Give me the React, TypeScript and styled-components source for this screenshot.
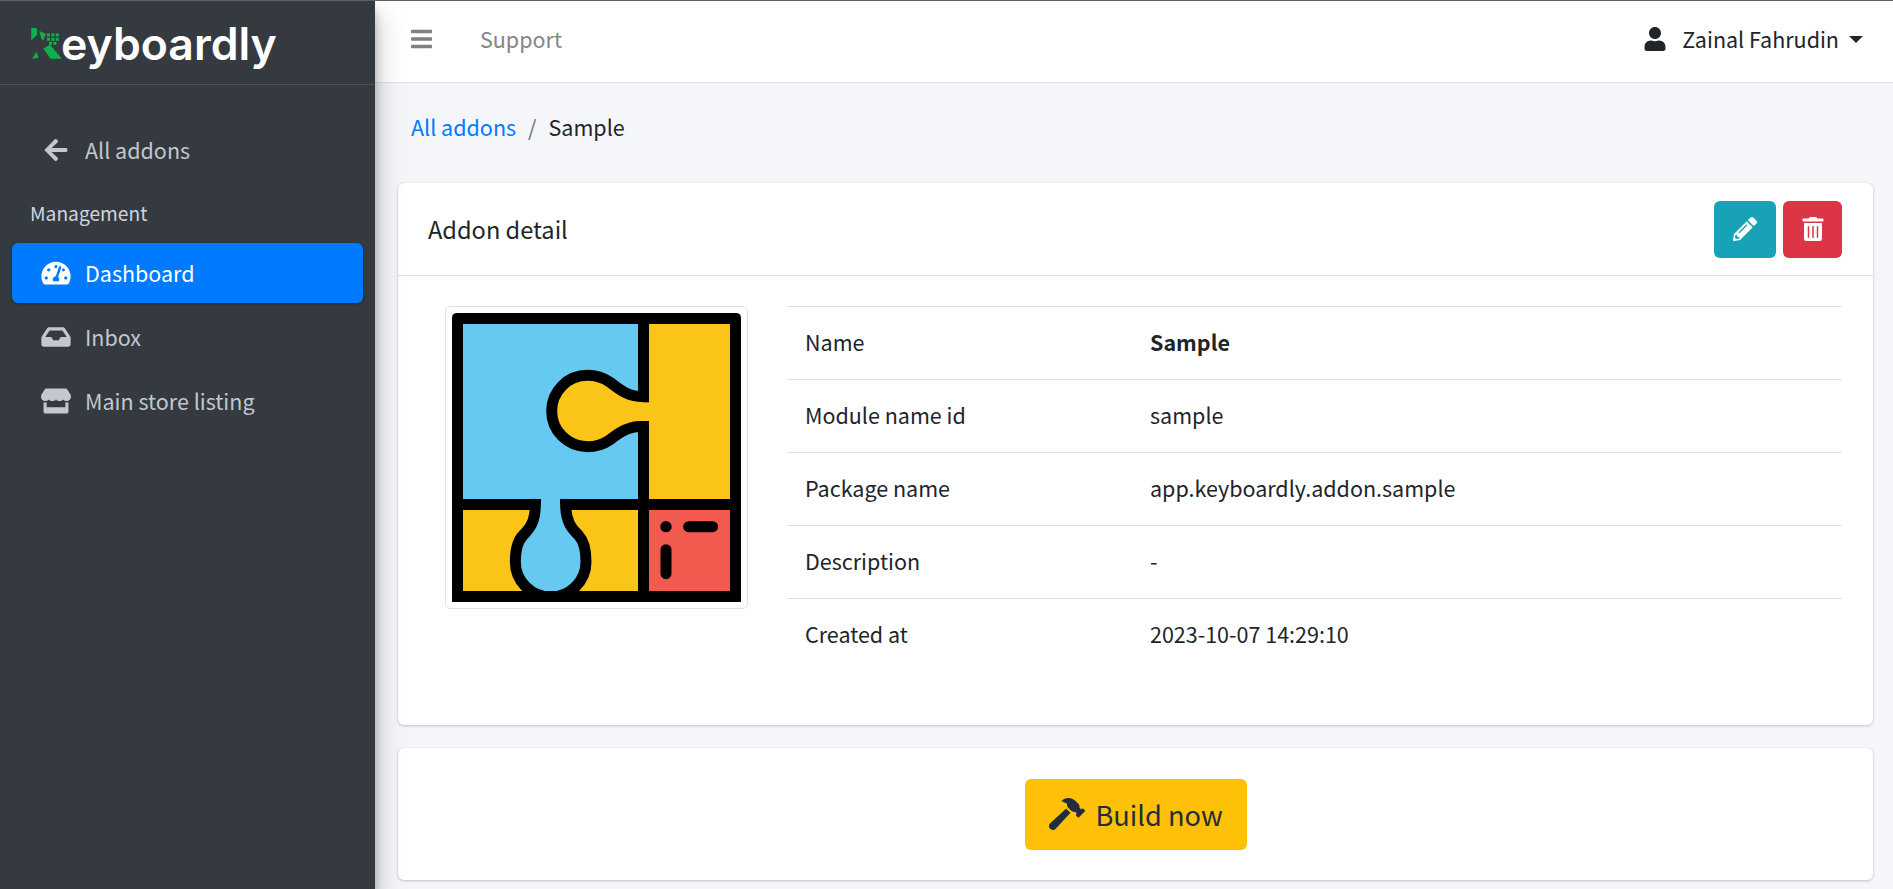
import styled, { createGlobalStyle } from 'styled-components'
import {
  FaArrowLeft,
  FaBars,
  FaHammer,
  FaInbox,
  FaPencilAlt,
  FaStore,
  FaTachometerAlt,
  FaTrashAlt,
  FaUser,
} from 'react-icons/fa'

const GlobalStyle = createGlobalStyle`
  html, body {
    margin: 0;
    padding: 0;
    height: 100%;
  }
  body {
    font-family: "Noto Sans CJK SC", "Open Sans", sans-serif;
    font-size: 21.5px;
    line-height: 30px;
    color: #212529;
    background: #f4f6f9;
  }
  * {
    box-sizing: border-box;
  }
`

const rows = [
  { label: 'Name', value: 'Sample', strong: true },
  { label: 'Module name id', value: 'sample' },
  { label: 'Package name', value: 'app.keyboardly.addon.sample' },
  { label: 'Description', value: '-' },
  { label: 'Created at', value: '2023-10-07 14:29:10' },
]

const logoDots = [
  [141, 101],
  [154, 101],
  [167, 101],
  [141, 114],
  [154, 114],
  [167, 114],
  [147, 126],
  [160, 126],
]

export default function App() {
  return (
    <>
      <GlobalStyle />
      <Page>
        <Sidebar>
          <Brand>
            <LogoMark viewBox='94 85 91 92' aria-hidden='true'>
              <path d='M94 85h17l1 20-18 17z' fill='#0db14b' />
              <path d='M118 94l20 8-8 20-6-6z' fill='#0db14b' />
              <path d='M97 176l13-21 6 19z' fill='#0db14b' />
              <path d='M130 146l20-11 35 41h-34z' fill='#0db14b' />
              {logoDots.map(([x, y]) => (
                <rect key={`${x}-${y}`} x={x} y={y} width='9' height='9' fill='#0db14b' />
              ))}
            </LogoMark>
            <BrandName>eyboardly</BrandName>
          </Brand>
          <SideNav>
            <SideLink>
              <FaArrowLeft />
              All addons
            </SideLink>
            <SideHeading>Management</SideHeading>
            <SideLink $active>
              <FaTachometerAlt />
              Dashboard
            </SideLink>
            <SideLink>
              <FaInbox />
              Inbox
            </SideLink>
            <SideLink>
              <FaStore />
              Main store listing
            </SideLink>
          </SideNav>
        </Sidebar>

        <Main>
          <TopBar>
            <BarsButton>
              <FaBars />
            </BarsButton>
            <TopLink>Support</TopLink>
            <UserMenu>
              <FaUser />
              Zainal Fahrudin
              <Caret />
            </UserMenu>
          </TopBar>

          <Content>
            <Breadcrumb>
              <Crumb href='#'>All addons</Crumb>
              <CrumbDivider>/</CrumbDivider>
              <span>Sample</span>
            </Breadcrumb>

            <DetailCard>
              <CardHeader>
                <CardTitle>Addon detail</CardTitle>
                <HeaderActions>
                  <IconButton $color='#17a2b8' $width={62}>
                    <FaPencilAlt />
                  </IconButton>
                  <IconButton $color='#dc3545' $width={59}>
                    <FaTrashAlt />
                  </IconButton>
                </HeaderActions>
              </CardHeader>
              <CardBody>
                <Thumbnail>
                  <PuzzleIcon />
                </Thumbnail>
                <InfoTable>
                  <tbody>
                    {rows.map((row) => (
                      <tr key={row.label}>
                        <LabelCell>{row.label}</LabelCell>
                        <ValueCell $strong={row.strong}>{row.value}</ValueCell>
                      </tr>
                    ))}
                  </tbody>
                </InfoTable>
              </CardBody>
            </DetailCard>

            <BuildCard>
              <BuildButton>
                <FaHammer />
                Build now
              </BuildButton>
            </BuildCard>
          </Content>
        </Main>
      </Page>
    </>
  )
}

function PuzzleIcon() {
  return (
    <svg viewBox='66 54 867 867' width='289' height='289' aria-hidden='true'>
      <rect x='66' y='54' width='867' height='867' rx='14' fill='#000' />
      <rect x='99' y='87' width='525' height='525' fill='#66c9f1' />
      <rect x='657' y='87' width='243' height='525' fill='#fbc419' />
      <rect x='99' y='645' width='525' height='243' fill='#fbc419' />
      <rect x='657' y='645' width='243' height='243' fill='#f25a50' />
      <path
        d='M640 305C590 305 565 280 540 262C520 248 497 241 472 241A107 107 0 0 0 472 455C497 455 520 448 540 434C565 416 590 394 640 394'
        fill='#fbc419'
        stroke='#000'
        strokeWidth='33'
        strokeLinecap='round'
      />
      <rect x='620' y='322' width='40' height='56' fill='#fbc419' />
      <path
        d='M316 628C316 680 300 700 280 720C262 738 256 770 256 800A106 106 0 0 0 468 800C468 770 462 738 445 720C425 700 407 680 407 628'
        fill='#66c9f1'
        stroke='#000'
        strokeWidth='33'
        strokeLinecap='round'
      />
      <rect x='333' y='608' width='57' height='44' fill='#66c9f1' />
      <rect x='66' y='888' width='867' height='33' fill='#000' />
      <circle cx='708' cy='695' r='17' fill='#000' />
      <path
        d='M776 695H848M708 764V836'
        stroke='#000'
        strokeWidth='33'
        strokeLinecap='round'
      />
    </svg>
  )
}

const Page = styled.div`
  display: flex;
  height: 100vh;
  overflow: hidden;
  border-top: 1px solid #5f6063;
`

const Sidebar = styled.aside`
  flex: 0 0 375px;
  background: #343a40;
  color: #c2c7d0;
  position: relative;
  z-index: 2;
  box-shadow: 0 14px 28px rgba(0, 0, 0, 0.25), 0 10px 10px rgba(0, 0, 0, 0.22);
`

const Brand = styled.div`
  display: flex;
  align-items: center;
  height: 84px;
  padding: 2px 0 0 31px;
  border-bottom: 1px solid #4b545c;
`

const LogoMark = styled.svg`
  width: 31px;
  height: 31px;
  flex: none;
`

const BrandName = styled.span`
  font-family: 'Inter', sans-serif;
  font-weight: 600;
  font-size: 44.6px;
  line-height: 44px;
  color: #fff;
  margin-left: -1px;
`

const SideNav = styled.nav`
  display: flex;
  flex-direction: column;
  padding: 35px 12px 0;
`

const SideLink = styled.a<{ $active?: boolean }>`
  display: flex;
  align-items: center;
  height: 60px;
  margin-bottom: 4px;
  padding: 0 0 1px 29px;
  border-radius: 6px;
  color: ${({ $active }) => ($active ? '#fff' : '#c2c7d0')};
  background: ${({ $active }) => ($active ? '#007bff' : 'transparent')};
  box-shadow: ${({ $active }) =>
    $active ? '0 1px 3px rgba(0, 0, 0, 0.3)' : 'none'};

  svg {
    width: 30px;
    height: 26px;
    margin-right: 14px;
    flex: none;
  }
`

const SideHeading = styled.div`
  height: 32px;
  margin: 13px 0 14px;
  padding-left: 18px;
  font-size: 19.2px;
  line-height: 32px;
  color: #d0d4db;
`

const Main = styled.div`
  flex: 1;
  min-width: 0;
  display: flex;
  flex-direction: column;
`

const TopBar = styled.header`
  display: flex;
  align-items: center;
  height: 82px;
  padding: 0 30px 5px 36px;
  background: #fff;
  border-bottom: 1px solid #dee2e6;
`

const BarsButton = styled.span`
  display: flex;
  color: #808080;
  margin-right: 48px;

  svg {
    width: 21px;
    height: 24px;
  }
`

const TopLink = styled.span`
  color: #858585;
`

const UserMenu = styled.div`
  margin-left: auto;
  display: flex;
  align-items: center;
  color: #212529;

  svg {
    width: 22px;
    height: 24px;
    margin-right: 16px;
  }
`

const Caret = styled.span`
  width: 0;
  height: 0;
  margin-left: 10px;
  border-top: 7px solid #212529;
  border-left: 7px solid transparent;
  border-right: 7px solid transparent;
`

const Content = styled.main`
  flex: 1;
  padding: 0 20px 0 23px;
`

const Breadcrumb = styled.nav`
  display: flex;
  align-items: center;
  height: 100px;
  padding: 0 0 13px 13px;
`

const Crumb = styled.a`
  color: #007bff;
  text-decoration: none;
`

const CrumbDivider = styled.span`
  margin: 0 12px;
  color: #6c757d;
`

const Card = styled.section`
  background: #fff;
  border-radius: 6px;
  box-shadow: 0 0 1px rgba(0, 0, 0, 0.125), 0 1px 3px rgba(0, 0, 0, 0.2);
`

const DetailCard = styled(Card)`
  height: 542px;
  margin-bottom: 23px;
`

const CardHeader = styled.div`
  display: flex;
  align-items: center;
  justify-content: space-between;
  height: 93px;
  padding: 0 31px 0 30px;
  border-bottom: 1px solid #dee2e6;
`

const CardTitle = styled.h3`
  margin: 0;
  font-size: 23.6px;
  font-weight: 400;
  line-height: 30px;
`

const HeaderActions = styled.div`
  display: flex;
  gap: 7px;
`

const IconButton = styled.button<{ $color: string; $width: number }>`
  display: flex;
  align-items: center;
  justify-content: center;
  width: ${({ $width }) => $width}px;
  height: 57px;
  padding: 0;
  border: 0;
  border-radius: 6px;
  background: ${({ $color }) => $color};
  color: #fff;

  svg {
    width: 24px;
    height: 24px;
  }
`

const CardBody = styled.div`
  display: flex;
  align-items: flex-start;
  padding: 30px 31px 0 47px;
`

const Thumbnail = styled.div`
  flex: none;
  display: flex;
  width: 303px;
  height: 303px;
  padding: 6px;
  margin-right: 39px;
  background: #fff;
  border: 1px solid #dee2e6;
  border-radius: 5px;
`

const InfoTable = styled.table`
  flex: 1;
  border-collapse: collapse;
  table-layout: fixed;
`

const LabelCell = styled.td`
  width: 345px;
  height: 73px;
  padding: 0 18px 2px;
  border-top: 1px solid #dee2e6;
`

const ValueCell = styled.td<{ $strong?: boolean }>`
  height: 73px;
  padding: 0 18px 2px;
  font-weight: ${({ $strong }) => ($strong ? 700 : 400)};
  border-top: 1px solid #dee2e6;
`

const BuildCard = styled(Card)`
  display: flex;
  align-items: center;
  justify-content: center;
  height: 132px;
`

const BuildButton = styled.button`
  display: flex;
  align-items: center;
  gap: 11px;
  width: 222px;
  height: 71px;
  padding: 0 0 0 24px;
  border: 0;
  border-radius: 6px;
  background: #ffc107;
  color: #1f2d3d;
  font: inherit;
  font-size: 27.2px;

  svg {
    width: 36px;
    height: 32px;
  }
`
